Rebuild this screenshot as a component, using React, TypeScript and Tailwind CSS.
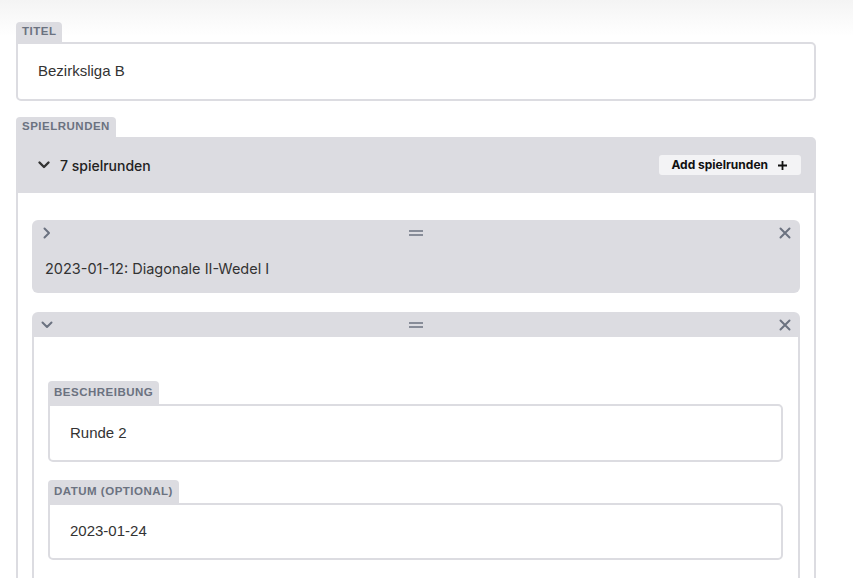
import React from "react";

const Tab = ({ children, h = "h-[20px]" }: { children: React.ReactNode; h?: string }) => (
  <div className={`inline-flex items-center ${h} px-[6px] bg-[#dcdce1] rounded-t-[4px] text-[11.5px] tracking-[0.5px] font-bold text-[#6b7280] uppercase [font-family:'Liberation_Sans',Arial,sans-serif]`}>
    {children}
  </div>
);

const Field = ({ label, value, tabH, boxH }: { label: string; value: string; tabH?: string; boxH: string }) => (
  <div className="flex flex-col items-start">
    <Tab h={tabH}>{label}</Tab>
    <div className={`w-full ${boxH} border-2 border-[#dcdce1] rounded-b-[5px] rounded-tr-[5px] bg-white flex items-center px-[20px] text-[15px] text-[#333] [font-family:'Liberation_Sans',Arial,sans-serif]`}>
      {value}
    </div>
  </div>
);

const ChevronDown = ({ cls }: { cls: string }) => (
  <svg viewBox="0 0 14 14" className={cls} fill="none" stroke="currentColor" strokeWidth="2" strokeLinecap="round" strokeLinejoin="round">
    <path d="M2.5 4.5 L7 9 L11.5 4.5" />
  </svg>
);

const ChevronRight = ({ cls }: { cls: string }) => (
  <svg viewBox="0 0 14 14" className={cls} fill="none" stroke="currentColor" strokeWidth="2" strokeLinecap="round" strokeLinejoin="round">
    <path d="M4.5 2.5 L9 7 L4.5 11.5" />
  </svg>
);

const Handle = () => (
  <svg viewBox="0 0 14 8" className="w-[14px] h-[8px] text-[#6b7280]" fill="none" stroke="currentColor" strokeWidth="1.6">
    <path d="M0 2 H14 M0 6 H14" />
  </svg>
);

const XIcon = () => (
  <svg viewBox="0 0 12 12" className="w-[12px] h-[12px] text-[#6b7280]" fill="none" stroke="currentColor" strokeWidth="2" strokeLinecap="round">
    <path d="M1.5 1.5 L10.5 10.5 M10.5 1.5 L1.5 10.5" />
  </svg>
);

const ItemHeader = ({ open }: { open: boolean }) => (
  <div className="h-[25px] grid grid-cols-[1fr_auto_1fr] items-center px-[8px]">
    <div className="flex">
      {open ? <ChevronDown cls="w-[14px] h-[14px] text-[#6b7280]" /> : <ChevronRight cls="w-[14px] h-[14px] text-[#6b7280]" />}
    </div>
    <Handle />
    <div className="flex justify-end pr-[1px]">
      <XIcon />
    </div>
  </div>
);

export default function App() {
  return (
    <div className="min-h-screen bg-[linear-gradient(to_bottom,#f4f4f4_0px,#ffffff_36px)] [font-family:Inter,'Noto_Sans',sans-serif] text-[#333]">
      <div className="w-[800px] ml-[16px] pt-[22px] flex flex-col gap-[16px]">
        <Field label="Titel" value="Bezirksliga B" boxH="h-[59px]" />

        <div className="flex flex-col items-start">
          <Tab>Spielrunden</Tab>
          <div className="w-full h-[56px] bg-[#dcdce1] rounded-tr-[5px] flex items-center justify-between pl-[21px] pr-[15px]">
            <div className="flex items-center gap-[9px] text-[14px] font-medium text-[#222]">
              <ChevronDown cls="w-[14px] h-[14px] text-[#333] [stroke-width:2.4]" />
              <span>7 spielrunden</span>
            </div>
            <button className="h-[20px] pl-[12px] pr-[14px] bg-[#f3f3f5] rounded-[3px] flex items-center gap-[10px] text-[12px] font-bold text-[#111]">
              <span>Add spielrunden</span>
              <svg viewBox="0 0 10 10" className="w-[9px] h-[9px]" fill="none" stroke="currentColor" strokeWidth="2">
                <path d="M5 0 V10 M0 5 H10" />
              </svg>
            </button>
          </div>
          <div className="w-full border-x-2 border-[#dcdce1] bg-white px-[14px] pt-[27px] pb-[20px] flex flex-col gap-[19px]">
            <div className="bg-[#dcdce1] rounded-[6px]">
              <ItemHeader open={false} />
              <div className="h-[48px] flex items-center px-[13px] text-[14.5px] text-[#333]">
                2023-01-12: Diagonale II-Wedel I
              </div>
            </div>

            <div className="flex flex-col">
              <div className="bg-[#dcdce1] rounded-t-[6px]">
                <ItemHeader open={true} />
              </div>
              <div className="border-x-2 border-[#dcdce1] bg-white pl-[14px] pr-[15px] pt-[44px] pb-[20px] flex flex-col gap-[18px]">
                <Field label="Beschreibung" value="Runde 2" tabH="h-[23px]" boxH="h-[58px]" />
                <Field label="Datum (optional)" value="2023-01-24" tabH="h-[23px]" boxH="h-[57px]" />
              </div>
            </div>
          </div>
        </div>
      </div>
    </div>
  );
}
